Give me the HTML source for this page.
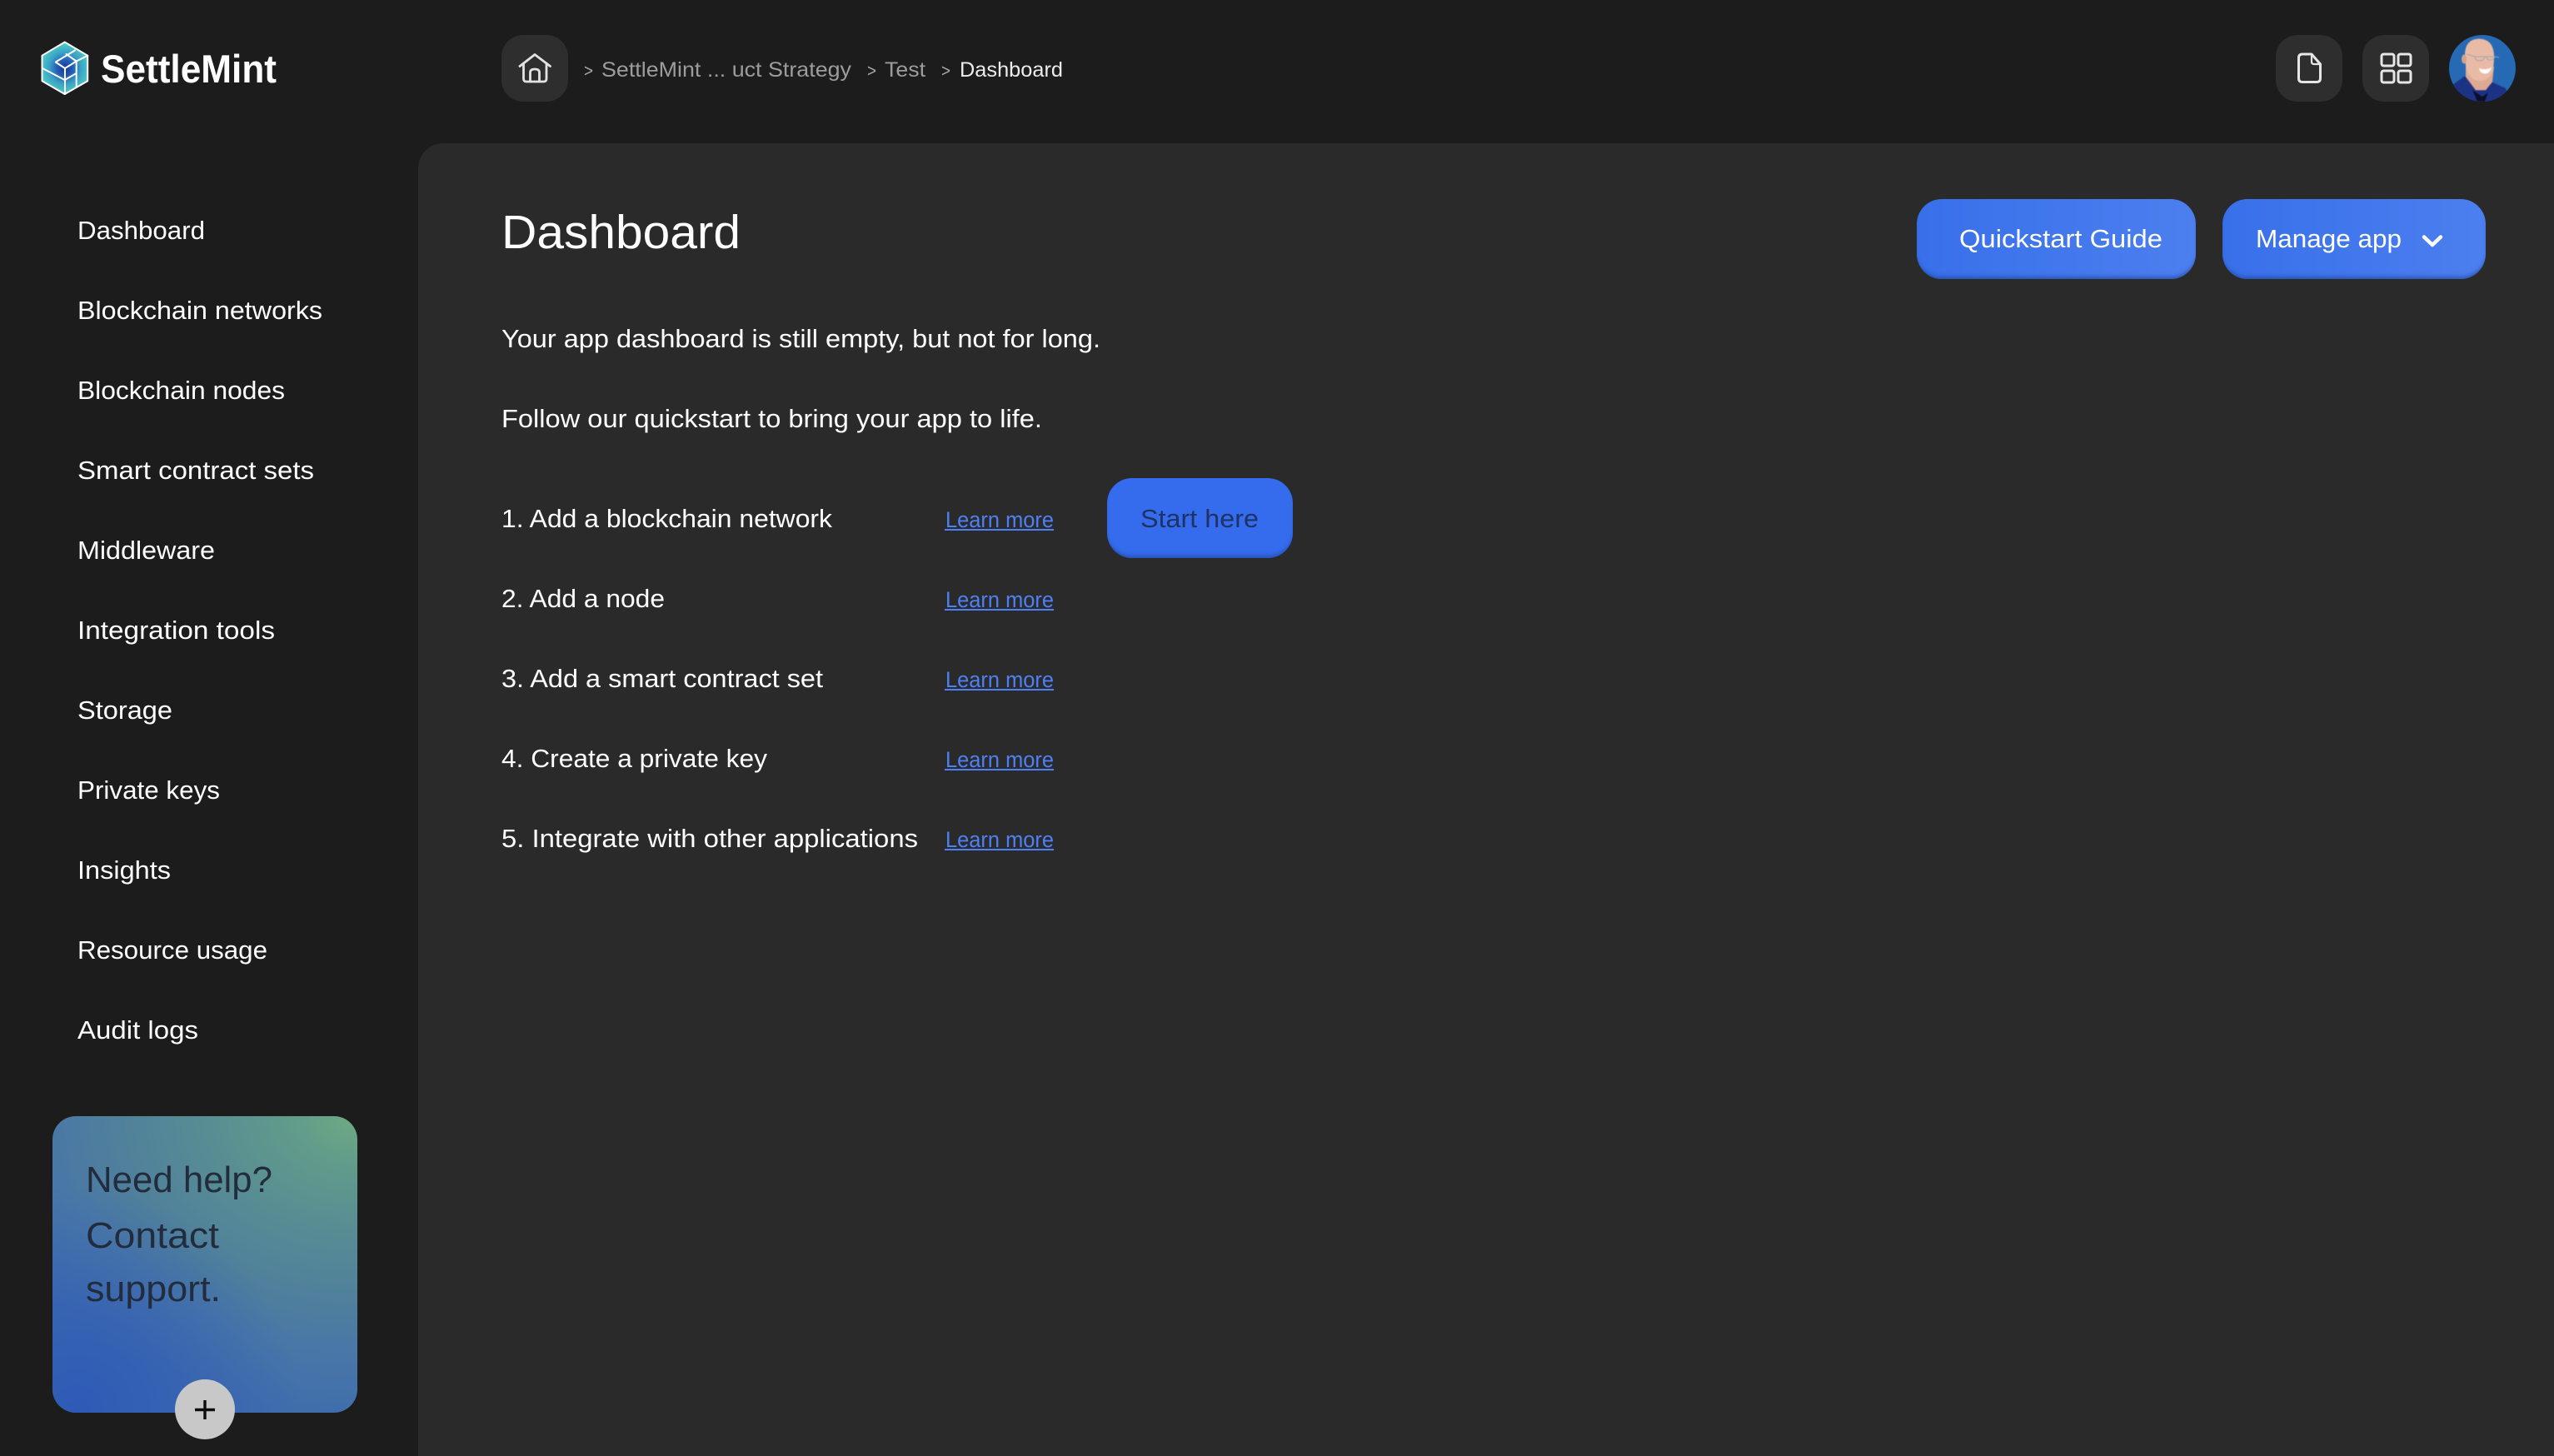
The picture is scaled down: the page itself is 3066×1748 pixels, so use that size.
<!DOCTYPE html>
<html lang="en">
<head>
<meta charset="utf-8">
<title>SettleMint Dashboard</title>
<style>
html,body{margin:0;padding:0;width:3066px;height:1748px;overflow:hidden;background:#1c1c1c}
.abs{position:absolute;box-sizing:border-box}
#main{left:502px;top:172px;width:2564px;height:1576px;background:#2a2a2a;border-top-left-radius:30px}
.ib{width:80px;height:80px;top:42px;background:#2e2e2e;border-radius:26px}
.btn{height:96px;top:239px;border-radius:30px;background:linear-gradient(90deg,#3870ea,#4c7fef);box-shadow:inset 0 -5px 5px -2px rgba(30,60,140,.55)}
#start{left:1329px;top:574px;width:223px;height:96px;border-radius:30px;background:#356ced;box-shadow:inset 0 -5px 5px -2px rgba(30,60,140,.55)}
#card{left:63px;top:1340px;width:366px;height:356px;border-radius:28px;background:radial-gradient(ellipse 130% 100% at 100% 0%,#6fab83 0%,#629c8a 15%,#578c94 40%,#4f7f9c 63%,#4a78a6 77%,#406eac 100%);overflow:hidden}
#card:after{content:"";position:absolute;inset:0;background:radial-gradient(circle at 8% 100%,rgba(44,88,184,.9) 0%,rgba(44,88,184,0) 55%)}
#plus{left:210px;top:1656px;width:72px;height:72px;border-radius:50%;background:#c8c8c8}
svg#s{position:absolute;left:0;top:0}
text{font-family:"Liberation Sans",sans-serif;fill:#fff}
.n{font-size:31px}
.l{font-size:26.5px;fill:#4d80f2}
.b{font-size:25px;fill:#9c9c9c}
.g{font-size:21px;fill:#a8a8a8}
.h{font-size:44px;fill:#222c3c}
</style>
</head>
<body>
<div class="abs" id="main"></div>
<div class="abs ib" style="left:602px"></div>
<div class="abs ib" style="left:2732px"></div>
<div class="abs ib" style="left:2836px"></div>
<div class="abs btn" style="left:2301px;width:335px"></div>
<div class="abs btn" style="left:2668px;width:316px"></div>
<div class="abs" id="start"></div>
<div class="abs" id="card"></div>
<div class="abs" id="plus"></div>

<svg id="s" width="3066" height="1748" viewBox="0 0 3066 1748" xmlns="http://www.w3.org/2000/svg">
<defs>
<radialGradient id="lg" gradientUnits="userSpaceOnUse" cx="78" cy="82" r="30">
<stop offset="0" stop-color="#17389c"/><stop offset=".3" stop-color="#2458b4"/><stop offset=".62" stop-color="#38a0c6"/><stop offset="1" stop-color="#50cbc4"/>
</radialGradient>
<clipPath id="av"><circle cx="2980" cy="82" r="40"/></clipPath>
<filter id="bl"><feGaussianBlur stdDeviation=".6"/></filter>
</defs>

<!-- logo -->
<g fill="none" stroke="#fff" stroke-width="2" stroke-linejoin="round" stroke-linecap="round">
<path d="M77.7 50.5 105.2 66.7V97.3L77.7 113 50.5 97.3V66.7Z" fill="url(#lg)"/>
<path d="M78 82 66.7 74.500 90 60.500M78 82 91.700 73.500 79.500 65M91.700 73.500 105.200 66.700M78 82V113M91.700 73.500V105M50.500 81.700 77.700 96 91.700 88"/>
</g>
<text x="121" y="99" font-size="47" font-weight="700" textLength="211" lengthAdjust="spacingAndGlyphs">SettleMint</text>

<!-- home icon -->
<g fill="none" stroke="#e2e2e2" stroke-width="2.8" stroke-linejoin="round" stroke-linecap="round">
<path d="M624 79.500 642 65.500 660.500 79.500"/>
<path d="M628.500 76V94.500Q628.500 98 632 98H652.500Q656 98 656 94.500V76"/>
<path d="M636.500 98V87Q636.500 83 642 83Q647.500 83 647.500 87V98"/>
</g>

<!-- breadcrumb -->
<text class="g" x="701" y="92" textLength="11" lengthAdjust="spacingAndGlyphs">&gt;</text>
<text class="b" x="722" y="92" textLength="300" lengthAdjust="spacingAndGlyphs">SettleMint ... uct Strategy</text>
<text class="g" x="1041" y="92" textLength="11" lengthAdjust="spacingAndGlyphs">&gt;</text>
<text class="b" x="1062" y="92" textLength="49" lengthAdjust="spacingAndGlyphs">Test</text>
<text class="g" x="1130" y="92" textLength="11" lengthAdjust="spacingAndGlyphs">&gt;</text>
<text class="b" x="1152" y="92" textLength="124" lengthAdjust="spacingAndGlyphs" style="fill:#ececec">Dashboard</text>

<!-- doc icon -->
<g fill="none" stroke="#e6e6e6" stroke-width="3" stroke-linejoin="round">
<path d="M2764 65H2775L2785.500 77V94Q2785.500 98.500 2781 98.500H2764Q2759.500 98.500 2759.500 94V69.500Q2759.500 65 2764 65Z"/>
<path d="M2775 65V74Q2775 77 2778 77H2785.500" stroke-width="2.2"/>
</g>
<!-- grid icon -->
<g fill="none" stroke="#e6e6e6" stroke-width="3">
<rect x="2859" y="65" width="15" height="14" rx="2.500"/>
<rect x="2879" y="65" width="15" height="14" rx="2.500"/>
<rect x="2859" y="85" width="15" height="14" rx="2.500"/>
<rect x="2879" y="85" width="15" height="14" rx="2.500"/>
</g>

<!-- avatar -->
<g clip-path="url(#av)">
<rect x="2940" y="42" width="80" height="80" fill="#2669b4"/>
<g filter="url(#bl)">
<path d="M2944 102 2958 92 2964 90 2990 98 3008 106 3014 125H2944Z" fill="#1b3184"/>
<path d="M2960 80 2960 92 2972 108 2984 108 2992 98 2994 80Z" fill="#dcaa92"/>
<path d="M2959 66Q2959 47 2976 46.500Q2993 47 2994 66Q2994 85 2990 90Q2984 98 2976 97Q2966 96 2962 86Q2959 78 2959 66Z" fill="#e9bba6"/>
<ellipse cx="2958" cy="71" rx="3" ry="5.500" fill="#d8a088"/>
<path d="M2968 108 2980 116 2987 111 2983 122H2974Z" fill="#0b0f26"/>
<path d="M2961 65 2971 68Q2972 74 2978 73Q2982 72 2983 68H2985Q2986 73 2991 72Q2994 71 2995 68L3000 69M2971 68 2983 68M2985 68 2995 68" fill="none" stroke="#9fa3aa" stroke-width="1"/>
<path d="M2976 82Q2983 85 2991 81Q2988 90 2981 88Q2977 87 2976 82Z" fill="#fff"/>
</g>
</g>

<!-- sidebar nav -->
<g class="nav">
<text class="n" x="93" y="287" textLength="153" lengthAdjust="spacingAndGlyphs">Dashboard</text>
<text class="n" x="93" y="383" textLength="294" lengthAdjust="spacingAndGlyphs">Blockchain networks</text>
<text class="n" x="93" y="479" textLength="249" lengthAdjust="spacingAndGlyphs">Blockchain nodes</text>
<text class="n" x="93" y="575" textLength="284" lengthAdjust="spacingAndGlyphs">Smart contract sets</text>
<text class="n" x="93" y="671" textLength="165" lengthAdjust="spacingAndGlyphs">Middleware</text>
<text class="n" x="93" y="767" textLength="237" lengthAdjust="spacingAndGlyphs">Integration tools</text>
<text class="n" x="93" y="863" textLength="114" lengthAdjust="spacingAndGlyphs">Storage</text>
<text class="n" x="93" y="959" textLength="171" lengthAdjust="spacingAndGlyphs">Private keys</text>
<text class="n" x="93" y="1055" textLength="112" lengthAdjust="spacingAndGlyphs">Insights</text>
<text class="n" x="93" y="1151" textLength="228" lengthAdjust="spacingAndGlyphs">Resource usage</text>
<text class="n" x="93" y="1247" textLength="145" lengthAdjust="spacingAndGlyphs">Audit logs</text>
</g>

<!-- help card -->
<text class="h" x="103" y="1431" textLength="224" lengthAdjust="spacingAndGlyphs">Need help?</text>
<text class="h" x="103" y="1498" textLength="160" lengthAdjust="spacingAndGlyphs">Contact</text>
<text class="h" x="103" y="1562" textLength="162" lengthAdjust="spacingAndGlyphs">support.</text>
<path d="M246 1681V1704M234 1692.500H258" stroke="#0d0d0d" stroke-width="3.400" fill="none"/>

<!-- main -->
<text x="602" y="298" font-size="57" textLength="287" lengthAdjust="spacingAndGlyphs">Dashboard</text>
<text class="n" x="602" y="417" textLength="719" lengthAdjust="spacingAndGlyphs">Your app dashboard is still empty, but not for long.</text>
<text class="n" x="602" y="513" textLength="649" lengthAdjust="spacingAndGlyphs">Follow our quickstart to bring your app to life.</text>

<text class="n" x="602" y="633" textLength="397" lengthAdjust="spacingAndGlyphs">1. Add a blockchain network</text>
<text class="n" x="602" y="729" textLength="196" lengthAdjust="spacingAndGlyphs">2. Add a node</text>
<text class="n" x="602" y="825" textLength="386" lengthAdjust="spacingAndGlyphs">3. Add a smart contract set</text>
<text class="n" x="602" y="921" textLength="319" lengthAdjust="spacingAndGlyphs">4. Create a private key</text>
<text class="n" x="602" y="1017" textLength="500" lengthAdjust="spacingAndGlyphs">5. Integrate with other applications</text>

<text class="l" x="1135" y="633" textLength="130" lengthAdjust="spacingAndGlyphs">Learn more</text><rect x="1134" y="635" width="131" height="2" fill="#4d80f2"/>
<text class="l" x="1135" y="729" textLength="130" lengthAdjust="spacingAndGlyphs">Learn more</text><rect x="1134" y="731" width="131" height="2" fill="#4d80f2"/>
<text class="l" x="1135" y="825" textLength="130" lengthAdjust="spacingAndGlyphs">Learn more</text><rect x="1134" y="827" width="131" height="2" fill="#4d80f2"/>
<text class="l" x="1135" y="921" textLength="130" lengthAdjust="spacingAndGlyphs">Learn more</text><rect x="1134" y="923" width="131" height="2" fill="#4d80f2"/>
<text class="l" x="1135" y="1017" textLength="130" lengthAdjust="spacingAndGlyphs">Learn more</text><rect x="1134" y="1019" width="131" height="2" fill="#4d80f2"/>

<text class="n" x="1369" y="633" textLength="142" lengthAdjust="spacingAndGlyphs" style="fill:#1f3266">Start here</text>
<text class="n" x="2352" y="297" textLength="244" lengthAdjust="spacingAndGlyphs">Quickstart Guide</text>
<text class="n" x="2708" y="297" textLength="175" lengthAdjust="spacingAndGlyphs">Manage app</text>
<path d="M2910 284.500 2920 294 2930 284.500" fill="none" stroke="#fff" stroke-width="4.400" stroke-linecap="round" stroke-linejoin="round"/>
</svg>
</body>
</html>
